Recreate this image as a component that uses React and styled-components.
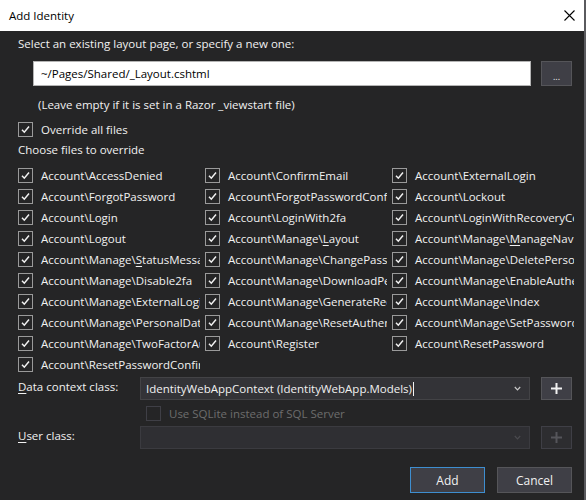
import React from "react";
import styled, { createGlobalStyle } from "styled-components";

const Global = createGlobalStyle`
  html, body {
    margin: 0;
    padding: 0;
    background: #252526;
  }
  body {
    font-family: "Open Sans", "Noto Sans", sans-serif;
    font-size: 11.5px;
  }
`;

const Window = styled.div`
  width: 586px;
  height: 500px;
  box-sizing: border-box;
  background: #252526;
  color: #f1f1f1;
  display: flex;
  flex-direction: column;
  overflow: hidden;
  border-right: 2px solid #5a5a5e;
`;

const TitleBar = styled.div`
  height: 31px;
  background: #ffffff;
  color: #000;
  display: flex;
  align-items: center;
  justify-content: space-between;
  padding: 0 9px 0 9px;
  font-size: 11.5px;
  flex-shrink: 0;
`;

const Body = styled.div`
  display: flex;
  flex-direction: column;
  padding: 5px 12px 0 18px;
`;

const Text = styled.div`
  line-height: 16px;
  white-space: nowrap;
  padding-left: ${(p) => p.$indent || 0}px;
  margin-top: ${(p) => p.$top || 0}px;
`;

const PathRow = styled.div`
  display: flex;
  gap: 10px;
  margin: 9px 0 0 15px;
`;

const TextBox = styled.div`
  flex: 1;
  height: 25px;
  box-sizing: border-box;
  background: #fff;
  border: 1px solid #b4b4b4;
  color: #000;
  display: flex;
  align-items: center;
  padding-left: 7px;
`;

const SquareButton = styled.div`
  width: 31px;
  height: ${(p) => p.$h || 25}px;
  box-sizing: border-box;
  background: ${(p) => (p.$disabled ? "#2d2d30" : "#3f3f46")};
  border: 1px solid ${(p) => (p.$disabled ? "#3f3f46" : "#555559")};
  color: ${(p) => (p.$disabled ? "#55555a" : "#f1f1f1")};
  display: flex;
  align-items: center;
  justify-content: center;
  flex-shrink: 0;
`;

const PlusButton = styled(SquareButton)`
  justify-self: end;
`;

const Dots = styled.span`
  font-size: 9px;
  margin-top: 5px;
`;

const CheckRow = styled.label`
  display: flex;
  align-items: center;
  gap: 8px;
  height: 21px;
  white-space: nowrap;
  overflow: hidden;
  color: ${(p) => (p.$disabled ? "#6d6d6d" : "#f1f1f1")};
`;

const Box = styled.span`
  width: 15px;
  height: 15px;
  box-sizing: border-box;
  border: 1px solid ${(p) => (p.$disabled ? "#3f3f46" : "#9a9a9a")};
  flex-shrink: 0;
  display: flex;
  align-items: center;
  justify-content: center;
`;

const FileGrid = styled.div`
  display: grid;
  grid-template-columns: repeat(3, 182px);
  grid-auto-rows: 21px;
  column-gap: 5px;
  margin-top: 7px;
`;

const FormGrid = styled.div`
  display: grid;
  grid-template-columns: 122px 390px 42px;
  align-items: center;
  margin-top: 2px;
`;

const FieldLabel = styled.div`
  align-self: start;
  padding-top: 2px;
  line-height: 16px;
`;

const Combo = styled.div`
  height: 23px;
  box-sizing: border-box;
  background: ${(p) => (p.$disabled ? "#2f2f33" : "#333337")};
  border: 1px solid ${(p) => (p.$disabled ? "#3b3b40" : "#434346")};
  display: flex;
  align-items: center;
  justify-content: space-between;
  padding: 0 8px 0 5px;
  color: #f1f1f1;
`;

const Caret = styled.span`
  display: inline-block;
  width: 1px;
  height: 14px;
  background: #f1f1f1;
  vertical-align: middle;
  margin-left: 1px;
`;

const Footer = styled.div`
  display: flex;
  justify-content: flex-end;
  gap: 12px;
  margin-top: 18px;
`;

const Button = styled.div`
  width: 75px;
  height: 26px;
  box-sizing: border-box;
  background: #3f3f46;
  border: 1px solid ${(p) => (p.$primary ? "#3e8ed0" : "#555559")};
  display: flex;
  align-items: center;
  justify-content: center;
  font-size: 12px;
`;

const U = styled.span`
  text-decoration: underline;
  text-underline-offset: 2px;
`;

const Check = ({ disabled }) => (
  <Box $disabled={disabled}>
    {!disabled && (
      <svg width="11" height="11" viewBox="0 0 11 11">
        <path d="M2 5.8 L4.3 8.2 L9 2.6" fill="none" stroke="#f1f1f1" strokeWidth="1.5" />
      </svg>
    )}
  </Box>
);

const Chevron = ({ color }) => (
  <svg width="7" height="5" viewBox="0 0 7 5">
    <path d="M0.8 1 L3.5 3.8 L6.2 1" fill="none" stroke={color} strokeWidth="1.2" />
  </svg>
);

const Plus = ({ color }) => (
  <svg width="11" height="11" viewBox="0 0 11 11">
    <path d="M5.5 0 V11 M0 5.5 H11" stroke={color} strokeWidth="2" />
  </svg>
);

const files = [
  ["Account\\AccessDenied"],
  ["Account\\ConfirmEmail"],
  ["Account\\ExternalLogin"],
  ["Account\\ForgotPassword"],
  ["Account\\ForgotPasswordConfirmation"],
  ["Account\\Lockout"],
  ["Account\\Login"],
  ["Account\\LoginWith2fa"],
  ["Account\\LoginWithRecoveryCode"],
  ["Account\\Logout"],
  ["Account\\Manage\\", "L", "ayout"],
  ["Account\\Manage\\", "M", "anageNav"],
  ["Account\\Manage\\", "S", "tatusMessage"],
  ["Account\\Manage\\ChangePassword"],
  ["Account\\Manage\\DeletePersonalData"],
  ["Account\\Manage\\Disable2fa"],
  ["Account\\Manage\\DownloadPersonalData"],
  ["Account\\Manage\\EnableAuthenticator"],
  ["Account\\Manage\\ExternalLogins"],
  ["Account\\Manage\\GenerateRecoveryCodes"],
  ["Account\\Manage\\Index"],
  ["Account\\Manage\\PersonalData"],
  ["Account\\Manage\\ResetAuthenticator"],
  ["Account\\Manage\\SetPassword"],
  ["Account\\Manage\\TwoFactorAuthentication"],
  ["Account\\Register"],
  ["Account\\ResetPassword"],
  ["Account\\ResetPasswordConfirmation"],
];

export default function App() {
  return (
    <Window>
      <Global />
      <TitleBar>
        <span>Add Identity</span>
        <svg width="11" height="11" viewBox="0 0 11 11">
          <path d="M0.5 0.5 L10.5 10.5 M10.5 0.5 L0.5 10.5" stroke="#000" strokeWidth="1.1" />
        </svg>
      </TitleBar>
      <Body>
        <Text>Select an existing layout page, or specify a new one:</Text>
        <PathRow>
          <TextBox>~/Pages/Shared/_Layout.cshtml</TextBox>
          <SquareButton>
            <Dots>...</Dots>
          </SquareButton>
        </PathRow>
        <Text $indent={20} $top={11}>
          (Leave empty if it is set in a Razor _viewstart file)
        </Text>
        <CheckRow style={{ marginTop: 6 }}>
          <Check />
          Override all files
        </CheckRow>
        <Text $top={2}>Choose files to override</Text>
        <FileGrid>
          {files.map((f, i) => (
            <CheckRow key={i}>
              <Check />
              <span>
                {f[0]}
                {f[1] && <U>{f[1]}</U>}
                {f[2]}
              </span>
            </CheckRow>
          ))}
        </FileGrid>
        <FormGrid>
          <FieldLabel>
            <U>D</U>ata context class:
          </FieldLabel>
          <Combo>
            <span>
              IdentityWebAppContext (IdentityWebApp.Models)
              <Caret />
            </span>
            <Chevron color="#c8c8c8" />
          </Combo>
          <PlusButton $h={23}>
            <Plus color="#f1f1f1" />
          </PlusButton>
          <span />
          <CheckRow $disabled style={{ height: 26, paddingLeft: 6 }}>
            <Check disabled />
            Use SQLite instead of SQL Server
          </CheckRow>
          <span />
          <FieldLabel>
            <U>U</U>ser class:
          </FieldLabel>
          <Combo $disabled>
            <span />
            <Chevron color="#4a4a4f" />
          </Combo>
          <PlusButton $h={23} $disabled>
            <Plus color="#55555a" />
          </PlusButton>
        </FormGrid>
        <Footer>
          <Button $primary>Add</Button>
          <Button>Cancel</Button>
        </Footer>
      </Body>
    </Window>
  );
}
